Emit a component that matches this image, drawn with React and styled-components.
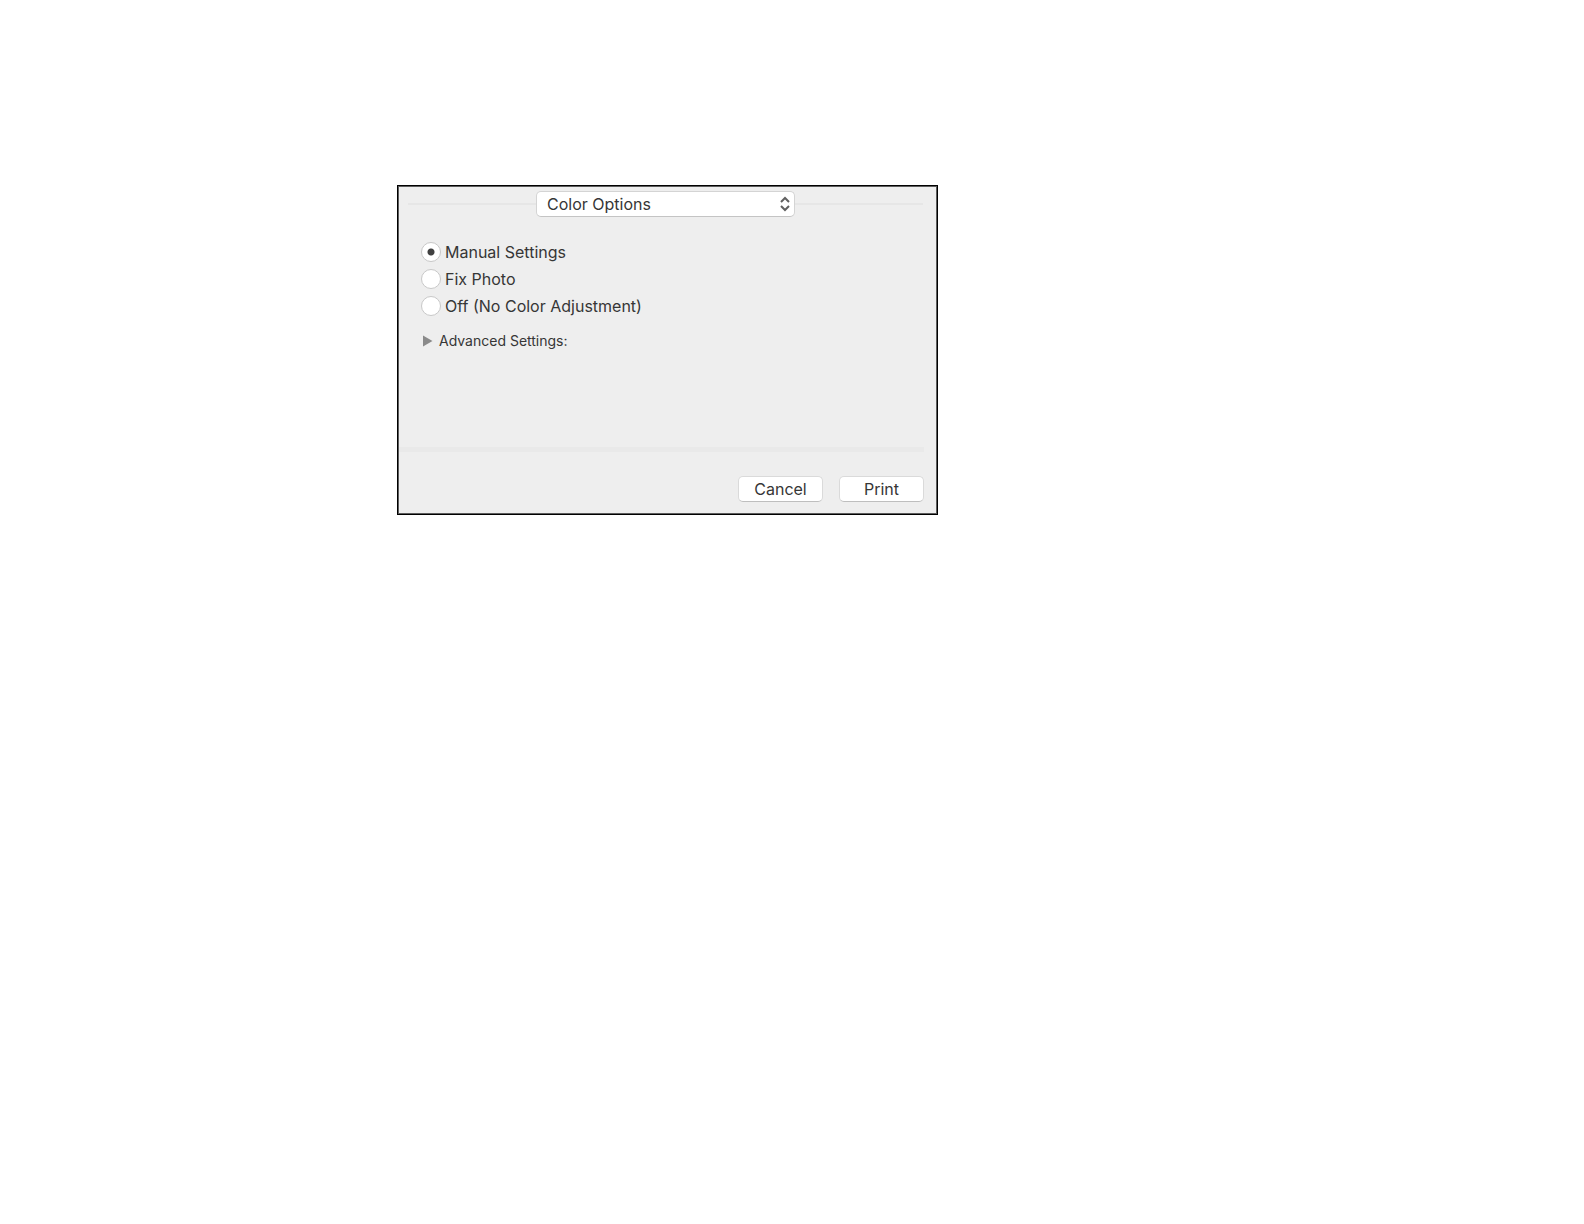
import React, { useState } from 'react';
import styled, { createGlobalStyle } from 'styled-components';

const GlobalStyle = createGlobalStyle`
    * {
        box-sizing: border-box;
    }

    body {
        margin: 0;
        background: #fff;
        color: #363636;
        font-family: Inter, 'Liberation Sans', sans-serif;
        font-size: 16px;
        line-height: 20px;
    }
`;

const Page = styled.main`
    display: grid;
    grid-template-columns: minmax(0, 541px);
    padding: 185px 16px 40px 397px;

    @media screen and (max-width: 992px) {
        padding: 40px 16px;
    }
`;

const Dialog = styled.form`
    border: 1px solid #000;
    outline: 1px solid #5c5c5c;
    outline-offset: -2px;
    background: #eee;
    padding-top: 5px;
`;

const Header = styled.div`
    display: flex;
    align-items: center;
    padding: 0 14px 0 10px;
`;

const Line = styled.span`
    flex: 1;
    height: 2px;
    background: #e6e6e6;
`;

const SelectBox = styled.div`
    position: relative;
    flex: 0 1 259px;

    svg {
        position: absolute;
        top: 5px;
        right: 4px;
        pointer-events: none;
    }
`;

const Select = styled.select`
    appearance: none;
    display: block;
    width: 100%;
    height: 26px;
    padding: 0 24px 0 10px;
    border: 1px solid #d4d4d4;
    border-bottom-color: #c4c4c4;
    border-radius: 5px;
    background: #fff;
    color: inherit;
    font: inherit;
`;

const Options = styled.fieldset`
    margin: 0;
    padding: 21px 23px 0;
    border: 0;
`;

const Option = styled.label`
    display: flex;
    align-items: center;
    gap: 4px;
    height: 27px;
`;

const Radio = styled.input`
    appearance: none;
    flex: none;
    width: 20px;
    height: 20px;
    margin: 0;
    border: 1px solid #c8c8c8;
    border-radius: 50%;
    background: #fff;

    &:checked {
        background: radial-gradient(circle, #404040 3px, #fff 4px);
    }
`;

const Disclosure = styled.button`
    display: flex;
    align-items: center;
    gap: 6px;
    margin: 12px 24px 0;
    padding: 0;
    border: 0;
    background: none;
    color: inherit;
    font: inherit;
    font-size: 14px;
`;

const Footer = styled.div`
    display: flex;
    justify-content: flex-end;
    gap: 16px;
    margin: 96px 13px 0 1px;
    padding: 24px 0 12px;
    border-top: 5px solid #e9e9e9;
`;

const Button = styled.button`
    width: 85px;
    height: 26px;
    padding: 0;
    border: 1px solid #dadada;
    border-bottom-color: #bebebe;
    border-radius: 5px;
    background: #fff;
    color: inherit;
    font: inherit;
`;

const modes = ['Manual Settings', 'Fix Photo', 'Off (No Color Adjustment)'];

export default function App() {
    const [mode, setMode] = useState(modes[0]);

    return (
        <Page>
            <GlobalStyle />
            <Dialog onSubmit={(e) => e.preventDefault()}>
                <Header>
                    <Line />
                    <SelectBox>
                        <Select aria-label="Print options">
                            <option>Color Options</option>
                        </Select>
                        <svg width="12" height="16" viewBox="0 0 12 16" fill="none" stroke="#606060" strokeWidth="2">
                            <path d="M2 6l4-4 4 4M2 10l4 4 4-4" />
                        </svg>
                    </SelectBox>
                    <Line />
                </Header>

                <Options aria-label="Color mode">
                    {modes.map((name) => (
                        <Option key={name}>
                            <Radio type="radio" name="mode" checked={mode === name} onChange={() => setMode(name)} />
                            {name}
                        </Option>
                    ))}
                </Options>

                <Disclosure type="button" aria-expanded="false">
                    <svg width="11" height="12" viewBox="0 0 11 12" fill="#8a8a8a">
                        <path d="M1 0.5L10.5 6L1 11.5z" />
                    </svg>
                    Advanced Settings:
                </Disclosure>

                <Footer>
                    <Button type="button">Cancel</Button>
                    <Button type="submit">Print</Button>
                </Footer>
            </Dialog>
        </Page>
    );
}
